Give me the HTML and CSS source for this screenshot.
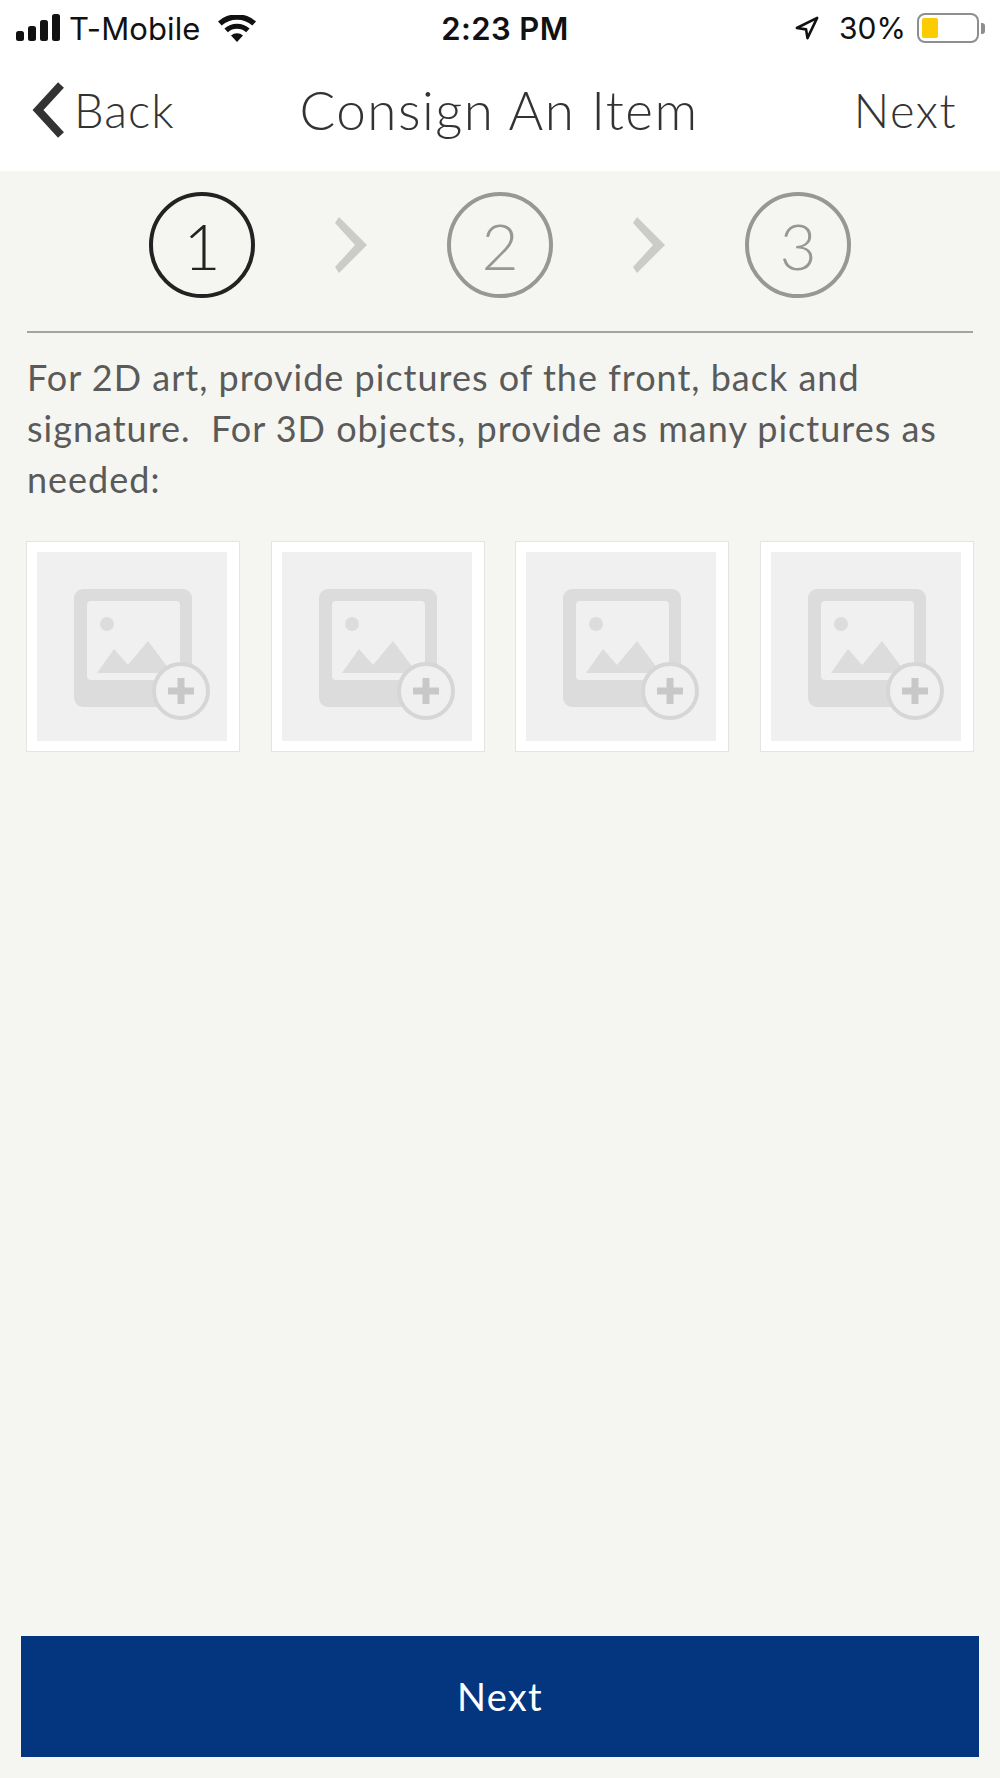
FILE: index.html
```html
<!DOCTYPE html>
<html lang="en">
<head>
<meta charset="utf-8">
<title>Consign An Item</title>
<link rel="stylesheet" href="styles.css">
</head>
<body>
<div class="screen">
  <header class="top">
    <div class="status">
      <div class="status-left">
        <svg class="signal" viewBox="0 0 46 28" aria-hidden="true"><rect x="0" y="17" width="8" height="10" rx="2.5"/><rect x="12" y="12" width="8" height="15" rx="2.5"/><rect x="24" y="6" width="8" height="21" rx="2.5"/><rect x="36" y="0" width="8" height="27" rx="2.5"/></svg>
        <span class="carrier">T-Mobile</span>
        <svg class="wifi" viewBox="0 0 38 27" aria-hidden="true"><path d="M19 27l-6-6.500a9 9 0 0 1 12 0z"/><path d="M9.800 17.200l-3.400-3.700a19 19 0 0 1 25.200 0l-3.400 3.700a14 14 0 0 0-18.400 0z"/><path d="M3.700 10.500L0 6.500a28.500 28.500 0 0 1 38 0l-3.700 4a23 23 0 0 0-30.600 0z"/></svg>
      </div>
      <div class="clock">2:23 PM</div>
      <div class="status-right">
        <svg class="loc" viewBox="0 0 26 26" aria-hidden="true"><path d="M24 2L2 13l10 1.500L13.500 24z"/></svg>
        <span class="pct">30%</span>
        <div class="battery"><div class="battery-fill"></div></div>
        <div class="battery-cap"></div>
      </div>
    </div>
    <nav class="nav">
      <div class="nav-back">
        <svg class="back-icon" viewBox="0 0 34 56" aria-hidden="true"><path d="M29 3L6 28l23 25"/></svg>
        <span>Back</span>
      </div>
      <h1 class="nav-title">Consign An Item</h1>
      <div class="nav-next">Next</div>
    </nav>
  </header>
  <main class="content">
    <div class="steps">
      <div class="step step-active">1</div>
      <svg class="chev" viewBox="0 0 32 56" aria-hidden="true"><path d="M4 0L0 6l20 22L0 50l4 6 28-28z"/></svg>
      <div class="step">2</div>
      <svg class="chev" viewBox="0 0 32 56" aria-hidden="true"><path d="M4 0L0 6l20 22L0 50l4 6 28-28z"/></svg>
      <div class="step">3</div>
    </div>
    <p class="intro">For 2D art, provide pictures of the front, back and signature.&nbsp; For 3D objects, provide as many pictures as needed:</p>
    <div class="photos">
      <div class="photo"><div class="photo-inner"><svg class="ph" viewBox="0 0 190 189" aria-hidden="true"><use href="#ph"/></svg></div></div>
      <div class="photo"><div class="photo-inner"><svg class="ph" viewBox="0 0 190 189" aria-hidden="true"><use href="#ph"/></svg></div></div>
      <div class="photo"><div class="photo-inner"><svg class="ph" viewBox="0 0 190 189" aria-hidden="true"><use href="#ph"/></svg></div></div>
      <div class="photo"><div class="photo-inner"><svg class="ph" viewBox="0 0 190 189" aria-hidden="true"><use href="#ph"/></svg></div></div>
    </div>
    <div class="cta">Next</div>
  </main>
</div>
<svg class="defs" aria-hidden="true">
  <symbol id="ph" viewBox="0 0 190 189">
    <path fill="#dcdcdc" fill-rule="evenodd" d="M46 37h100a9 9 0 0 1 9 9v100a9 9 0 0 1-9 9H46a9 9 0 0 1-9-9V46a9 9 0 0 1 9-9zm8 12a4 4 0 0 0-4 4v71a4 4 0 0 0 4 4h85a4 4 0 0 0 4-4V53a4 4 0 0 0-4-4z"/>
    <circle cx="70" cy="72" r="7" fill="#dcdcdc"/>
    <path fill="#dcdcdc" d="M60 121l17-24 14 16 20-24 24 32z"/>
    <circle cx="144" cy="139" r="27" fill="#f0f0f1" stroke="#d6d6d6" stroke-width="4"/>
    <path fill="#c8c8c8" d="M140.500 126h7v9.500h9.500v7h-9.500v9.500h-7v-9.500H131v-7h9.500z"/>
  </symbol>
</svg>
</body>
</html>
```
FILE: styles.css
```css
* { box-sizing: border-box; }
html, body { margin: 0; padding: 0; }
body { font-family: Lato, "Open Sans", sans-serif; background: #f5f6f2; color: #333; }
.screen { width: 1000px; height: 1778px; display: flex; flex-direction: column; overflow: hidden; }
.top { height: 171px; background: #fff; flex: none; }
.status { height: 56px; display: flex; justify-content: space-between; align-items: center; position: relative; padding: 0 15px 0 16px; color: #111; font-family: Inter, sans-serif; font-size: 31px; }
.status-left, .status-right { display: flex; align-items: center; }
.signal { width: 46px; height: 28px; fill: #111; }
.carrier { margin-left: 7px; letter-spacing: 0.100px; }
.wifi { width: 38px; height: 27px; fill: #111; margin-left: 18px; }
.clock { position: absolute; left: 0; right: 0; text-align: center; font-weight: 600; letter-spacing: 0.400px; pointer-events: none; padding-left: 10px; }
.loc { width: 24px; height: 24px; fill: none; stroke: #111; stroke-width: 2.800; stroke-linejoin: round; }
.pct { margin-left: 20px; font-size: 30px; }
.battery { width: 62px; height: 30px; margin-left: 11px; border: 2px solid #8e8e8e; border-radius: 8px; padding: 3px; }
.battery-fill { width: 16px; height: 100%; background: #fccb00; border-radius: 2px; }
.battery-cap { width: 4px; height: 11px; margin-left: 2px; background: #8e8e8e; border-radius: 0 3px 3px 0; }
.nav { height: 115px; display: flex; align-items: center; justify-content: space-between; position: relative; padding: 0 43px 8px 32px; color: #333; font-weight: 300; }
.nav-back { display: flex; align-items: center; font-size: 47px; letter-spacing: 1px; }
.back-icon { width: 34px; height: 56px; fill: none; stroke: #333; stroke-width: 8; margin-right: 8px; }
.nav-title { position: absolute; left: 0; right: 0; margin: 0; text-align: center; font-size: 53px; font-weight: 300; letter-spacing: 1.500px; padding-right: 2px; }
.nav-next { font-size: 47px; letter-spacing: 1.500px; }
.content { flex: 1; display: flex; flex-direction: column; padding: 21px 27px 21px; min-height: 0; }
.steps { height: 141px; border-bottom: 2px solid #a3a3a1; display: flex; justify-content: center; align-items: flex-start; gap: 80px; flex: none; }
.step { width: 106px; height: 106px; border: 4px solid #979795; border-radius: 50%; display: flex; align-items: center; justify-content: center; font-size: 64px; font-weight: 300; color: #979795; }
.step-active { border-color: #222; color: #222; }
.chev { width: 32px; height: 56px; margin-top: 25px; fill: #cbcbc9; }
.intro { margin: 19px 0 0; font-size: 36px; line-height: 51px; color: #5a5a5a; font-weight: 400; letter-spacing: 1px; }
.photos { margin: 36px -1px 0; display: flex; justify-content: space-between; flex: none; }
.photo { width: 214px; height: 211px; background: #fff; border: 1px solid #e4e4e1; padding: 10px 12px 10px 10px; }
.photo-inner { width: 100%; height: 100%; background: #f0f0f1; }
.ph { display: block; width: 100%; height: 100%; }
.cta { margin: auto -6px 0; height: 121px; padding-bottom: 2px; background: #03367f; color: #fff; display: flex; align-items: center; justify-content: center; font-size: 38px; font-weight: 400; letter-spacing: 1.300px; flex: none; }
.defs { position: absolute; width: 0; height: 0; }
```
